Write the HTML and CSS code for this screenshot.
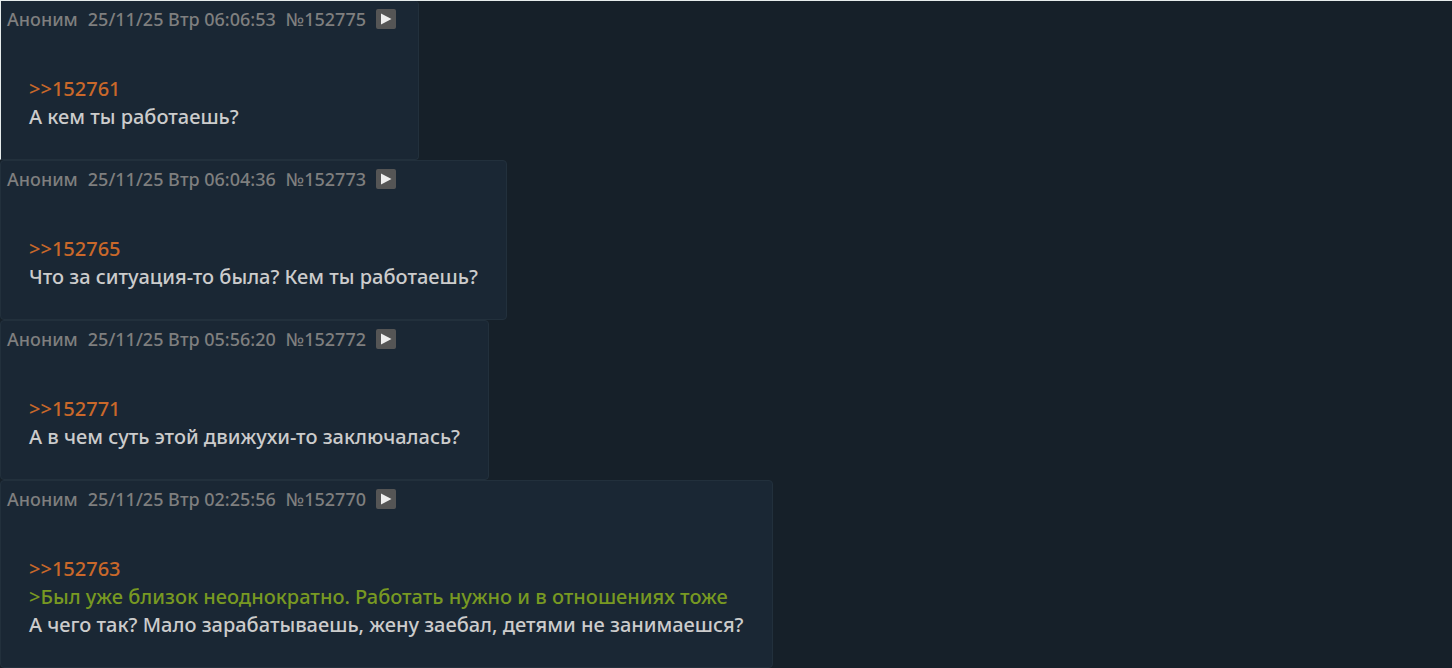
FILE: index.html
```
<!DOCTYPE html>
<html lang="ru">
<head>
  <meta charset="utf-8">
  <title>Тред</title>
  <link rel="stylesheet" href="styles.css">
</head>
<body>
  <main class="thread">
    <article class="post post-first">
      <div class="post-details">
        <span class="post-name">Аноним</span>
        <time class="post-time">25/11/25 Втр 06:06:53</time>
        <span class="post-number">№152775</span>
        <button class="post-menu" type="button" aria-label="Меню поста">
          <svg viewBox="0 0 20 20"><path d="M5 4.5v11L15.5 10z"/></svg>
        </button>
      </div>
      <div class="post-message">
        <a class="reply-link" href="#152761">&gt;&gt;152761</a>
        <p>А кем ты работаешь?</p>
      </div>
    </article>

    <article class="post">
      <div class="post-details">
        <span class="post-name">Аноним</span>
        <time class="post-time">25/11/25 Втр 06:04:36</time>
        <span class="post-number">№152773</span>
        <button class="post-menu" type="button" aria-label="Меню поста">
          <svg viewBox="0 0 20 20"><path d="M5 4.5v11L15.5 10z"/></svg>
        </button>
      </div>
      <div class="post-message">
        <a class="reply-link" href="#152765">&gt;&gt;152765</a>
        <p>Что за ситуация-то была? Кем ты работаешь?</p>
      </div>
    </article>

    <article class="post">
      <div class="post-details">
        <span class="post-name">Аноним</span>
        <time class="post-time">25/11/25 Втр 05:56:20</time>
        <span class="post-number">№152772</span>
        <button class="post-menu" type="button" aria-label="Меню поста">
          <svg viewBox="0 0 20 20"><path d="M5 4.5v11L15.5 10z"/></svg>
        </button>
      </div>
      <div class="post-message">
        <a class="reply-link" href="#152771">&gt;&gt;152771</a>
        <p>А в чем суть этой движухи-то заключалась?</p>
      </div>
    </article>

    <article class="post">
      <div class="post-details">
        <span class="post-name">Аноним</span>
        <time class="post-time">25/11/25 Втр 02:25:56</time>
        <span class="post-number">№152770</span>
        <button class="post-menu" type="button" aria-label="Меню поста">
          <svg viewBox="0 0 20 20"><path d="M5 4.5v11L15.5 10z"/></svg>
        </button>
      </div>
      <div class="post-message">
        <a class="reply-link" href="#152763">&gt;&gt;152763</a>
        <p class="quote">&gt;Был уже близок неоднократно. Работать нужно и в отношениях тоже</p>
        <p>А чего так? Мало зарабатываешь, жену заебал, детями не занимаешся?</p>
      </div>
    </article>
  </main>
</body>
</html>
```
FILE: styles.css
```
* {
  margin: 0;
  padding: 0;
  box-sizing: border-box;
}

body {
  background: #162029;
  color: #cccccc;
  font-family: "Trebuchet MS", "Noto Sans", sans-serif;
  font-size: 20px;
  font-weight: 500;
  line-height: 28px;
}

.thread {
  display: flex;
  flex-direction: column;
  align-items: flex-start;
  border-top: 1px solid #e6ecec;
}

.post {
  max-width: 100%;
  background: #1a2734;
  border: 1px solid #22303c;
  border-radius: 4px;
}

.post-first {
  border-top: none;
  border-left-color: #e6ecec;
  border-radius: 0 4px 4px 0;
}

.post-details {
  display: flex;
  align-items: center;
  gap: 10px;
  padding: 4px 22px 0 6px;
  color: #7f7f7f;
  font-size: 18px;
}

.post-menu {
  width: 20px;
  height: 20px;
  background: #555555;
  border: none;
  border-radius: 2px;
  cursor: pointer;
}

.post-menu svg {
  display: block;
  fill: #eeeeee;
}

.post-message {
  padding: 42px 28px 28px;
}

.reply-link {
  display: block;
  width: fit-content;
  color: #c9682a;
  text-decoration: none;
}

.reply-link:hover {
  text-decoration: underline;
}

.quote {
  color: #789922;
}
```
